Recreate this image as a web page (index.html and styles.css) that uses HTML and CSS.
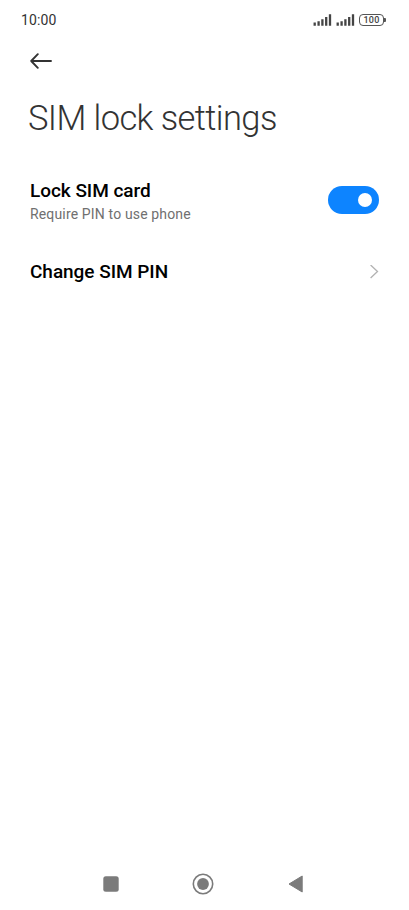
FILE: index.html
```html
<!DOCTYPE html>
<html lang="en">
<head>
<meta charset="utf-8">
<title>SIM lock settings</title>
<link rel="stylesheet" href="styles.css">
</head>
<body>
<header class="status">
  <span class="clock">10:00</span>
  <div class="indicators">
    <svg class="signal" width="19" height="12" viewBox="0 0 19 12"><path d="M1.7 9.7v1M5.6 8.500v2.200M9.400 6.500v4.200M13.200 4.200v6.500M17 1.500v9.200"/></svg>
    <svg class="signal" width="19" height="12" viewBox="0 0 19 12"><path d="M1.7 9.7v1M5.6 8.500v2.200M9.400 6.500v4.200M13.200 4.200v6.500M17 1.500v9.200"/></svg>
    <span class="battery">100</span><span class="nub"></span>
  </div>
</header>
<nav class="appbar">
  <svg width="22" height="16" viewBox="0 0 22 16"><path d="M7.8 1.2 1.2 8l6.6 6.8M1.2 8H21" fill="none" stroke="#333" stroke-width="1.9" stroke-linecap="round" stroke-linejoin="round"/></svg>
</nav>
<h1 class="title">SIM lock settings</h1>
<main class="list">
  <div class="row row-lock">
    <div><div class="label">Lock SIM card</div><div class="hint">Require PIN to use phone</div></div>
    <span class="switch"><span class="knob"></span></span>
  </div>
  <div class="row row-pin">
    <div class="label">Change SIM PIN</div>
    <svg class="chevron" width="9" height="14" viewBox="0 0 9 14"><path d="m.6 0 6.900 6.500L.6 13" fill="none" stroke="#b2b2b2" stroke-width="1.3"/></svg>
  </div>
</main>
<footer class="navbar">
  <svg width="16" height="16" viewBox="0 0 16 16"><rect x=".3" y=".3" width="15.400" height="15.400" rx="2.500" fill="#7b7b7b"/></svg>
  <svg width="22" height="22" viewBox="0 0 22 22"><circle cx="11" cy="11" r="9.700" fill="none" stroke="#7b7b7b" stroke-width="1.600"/><circle cx="11" cy="11" r="5.900" fill="#7b7b7b"/></svg>
  <svg width="16" height="18" viewBox="0 0 16 18"><path d="M14.200 1v16L1 9z" fill="#7b7b7b" stroke="#7b7b7b" stroke-width="1" stroke-linejoin="round"/></svg>
</footer>
</body>
</html>
```
FILE: styles.css
```css
* { box-sizing: border-box; }
body { margin: 0; height: 910px; background: #fff; font-family: Roboto, sans-serif; color: #000; display: flex; flex-direction: column; overflow: hidden; }
.status { height: 40px; padding: 0 23px 0 21px; display: flex; align-items: center; justify-content: space-between; }
.clock { font-size: 14px; letter-spacing: 0.1px; color: #333; }
.indicators { display: flex; align-items: center; }
.signal { fill: none; stroke: #444; stroke-width: 2.3px; stroke-linecap: square; overflow: visible; margin-right: 4px; }
.battery { width: 25px; height: 12px; border: 1.3px solid #555; border-radius: 4px; font-size: 9px; line-height: 10px; text-align: center; font-weight: 500; letter-spacing: 0.2px; color: #444; }
.nub { width: 2px; height: 4px; background: #555; border-radius: 0 1px 1px 0; }
.appbar { height: 42px; padding: 13px 30px; }
.appbar svg { display: block; }
.title { margin: 0; padding: 15px 28px 0; height: 83px; font-size: 34.5px; line-height: 42px; font-weight: 300; letter-spacing: -0.6px; color: #333; white-space: nowrap; }
.list { flex: 1; }
.row { display: flex; align-items: center; justify-content: space-between; padding: 0 30px; }
.row-lock { height: 70px; }
.row-pin { height: 73px; }
.label { font-size: 19px; line-height: 24px; font-weight: 500; letter-spacing: -0.04px; }
.row-lock .label { padding-top: 2px; }
.hint { font-size: 14px; line-height: 20px; margin-top: 1px; letter-spacing: 0.15px; color: #707070; }
.switch { width: 51px; height: 28px; border-radius: 14px; background: #0d84ff; display: flex; align-items: center; justify-content: flex-end; padding-right: 7px; }
.knob { width: 14px; height: 14px; border-radius: 50%; background: #fff; }
.navbar { height: 52px; padding: 0 105.500px 0 103px; display: flex; align-items: center; justify-content: space-between; }
```
